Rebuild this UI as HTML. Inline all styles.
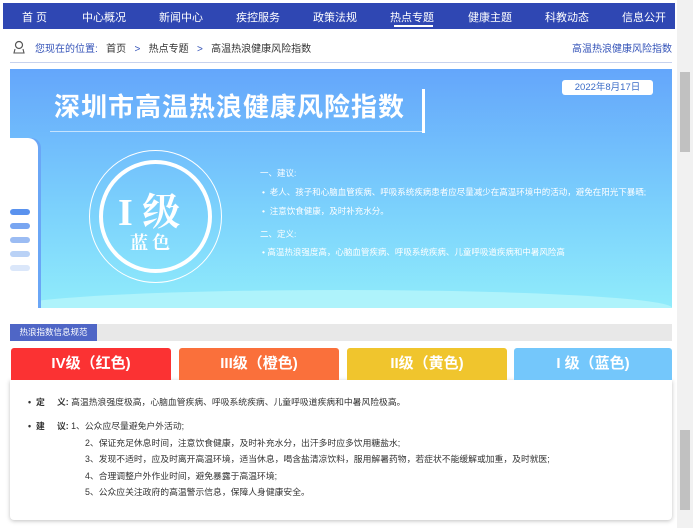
<!DOCTYPE html>
<html><head><meta charset="utf-8"><style>
*{margin:0;padding:0;box-sizing:border-box}
body{width:693px;height:528px;overflow:hidden;background:#fff;font-family:"Liberation Sans","Noto Sans CJK SC",sans-serif;position:relative}
.nav{position:absolute;left:3px;top:3px;width:672px;height:26px;background:#2f47b3;color:#fff;font-size:11px}
.nav span{position:absolute;top:6px}
.sb{position:absolute;right:0;top:0;width:16px;height:528px;background:#f1f1f1}
.a{position:absolute}
.card{position:absolute;top:348px;height:32px;border-radius:3px 3px 0 0;color:#fff;font-size:15px;font-weight:bold;text-align:center;line-height:32px}
</style></head><body>
<div class="nav">
<span style="left:19px">首 页</span><span style="left:79px">中心概况</span><span style="left:156px">新闻中心</span><span style="left:233px">疾控服务</span><span style="left:310px">政策法规</span><span style="left:387px">热点专题</span><span style="left:465px">健康主题</span><span style="left:542px">科教动态</span><span style="left:619px">信息公开</span>
<div class="a" style="left:391px;top:22px;width:39px;height:2px;background:#fff"></div>
</div>
<div class="sb"><div class="a" style="left:3px;top:72px;width:10px;height:80px;background:#c1c1c1"></div><div class="a" style="left:3px;top:430px;width:10px;height:80px;background:#c1c1c1"></div></div>
<svg class="a" style="left:13px;top:40px" width="12" height="14" viewBox="0 0 12 14"><circle cx="6" cy="5" r="3.5" fill="none" stroke="#555" stroke-width="1.2"/><path d="M2 9 L1 13 H11 L10 9" fill="none" stroke="#555" stroke-width="1.1"/></svg>
<div class="a" style="left:35px;top:40px;font-size:10px;color:#333"><span style="color:#3453b8">您现在的位置:</span>&nbsp;&nbsp;&nbsp;首页&nbsp;&nbsp;&nbsp;<span style="color:#3453b8">&gt;</span>&nbsp;&nbsp;&nbsp;热点专题&nbsp;&nbsp;&nbsp;<span style="color:#3453b8">&gt;</span>&nbsp;&nbsp;&nbsp;高温热浪健康风险指数</div>
<div class="a" style="left:572px;top:40px;font-size:10px;color:#3453b8">高温热浪健康风险指数</div>
<div class="a" style="left:10px;top:62px;width:662px;height:1px;background:#c7d2ee"></div>
<div class="a" style="left:10px;top:69px;width:662px;height:239px;background:linear-gradient(#64a6fb,#7cd2fc 60%,#90ecfb)"></div>
<div class="a" style="left:10px;top:290px;width:662px;height:18px;background:#aef3fb;border-radius:50% 50% 0 0/100% 100% 0 0"></div>
<div class="a" style="left:54px;top:87px;font-size:26px;font-weight:bold;color:#fff;letter-spacing:1px">深圳市高温热浪健康风险指数</div>
<div class="a" style="left:422px;top:89px;width:3px;height:44px;background:#fff"></div>
<div class="a" style="left:50px;top:131px;width:375px;height:1px;background:rgba(255,255,255,.6)"></div>
<div class="a" style="left:562px;top:80px;width:91px;height:15px;background:#fff;border-radius:3px;color:#3b6cc7;font-size:9.5px;text-align:center;line-height:15px">2022年8月17日</div>
<div class="a" style="left:10px;top:138px;width:28px;height:170px;background:#fff;border-radius:0 10px 0 0;box-shadow:3px 0 0 #6aa6f6"></div>
<div class="a" style="left:10px;top:209px;width:20px;height:6px;background:#5a92ee;border-radius:3px"></div>
<div class="a" style="left:10px;top:223px;width:20px;height:6px;background:#79a6f1;border-radius:3px"></div>
<div class="a" style="left:10px;top:237px;width:20px;height:6px;background:#9bbcf3;border-radius:3px"></div>
<div class="a" style="left:10px;top:251px;width:20px;height:6px;background:#bad2f6;border-radius:3px"></div>
<div class="a" style="left:10px;top:265px;width:20px;height:6px;background:#dbe7fa;border-radius:3px"></div>
<div class="a" style="left:89px;top:150px;width:133px;height:133px;border:1.5px solid #fff;border-radius:50%"></div>
<div class="a" style="left:99px;top:160px;width:113px;height:113px;border:4px solid #fff;border-radius:50%"></div>
<div class="a" style="left:118px;top:181px;font-size:38px;color:#fff;font-weight:bold;font-family:'Liberation Serif','Noto Serif CJK SC',serif">I 级</div>
<div class="a" style="left:130px;top:229px;font-size:18px;color:#fff;font-weight:bold;font-family:'Liberation Serif','Noto Serif CJK SC',serif;letter-spacing:4px">蓝色</div>
<div class="a" style="left:260px;top:167px;font-size:8.5px;color:#fff">一、建议:</div>
<div class="a" style="left:262px;top:186px;font-size:8.5px;color:#fff">•&nbsp; 老人、孩子和心脑血管疾病、呼吸系统疾病患者应尽量减少在高温环境中的活动，避免在阳光下暴晒;</div>
<div class="a" style="left:262px;top:205px;font-size:8.5px;color:#fff">•&nbsp; 注意饮食健康，及时补充水分。</div>
<div class="a" style="left:260px;top:228px;font-size:8.5px;color:#fff">二、定义:</div>
<div class="a" style="left:262px;top:246px;font-size:8.5px;color:#fff">• 高温热浪强度高，心脑血管疾病、呼吸系统疾病、儿童呼吸道疾病和中暑风险高</div>
<div class="a" style="left:10px;top:324px;width:662px;height:17px;background:#e8e8e8"></div>
<div class="a" style="left:10px;top:324px;width:87px;height:17px;background:#4f66c6;color:#fff;font-size:8.5px;line-height:17px;text-align:center">热浪指数信息规范</div>
<div class="a" style="left:10px;top:380px;width:662px;height:140px;background:#fff;box-shadow:0 1px 4px rgba(0,0,0,.25);border-radius:0 0 4px 4px"></div>
<div class="card" style="left:11px;width:160px;background:#fb3233">IV级（红色)</div>
<div class="card" style="left:179px;width:160px;background:#fa703b">III级（橙色)</div>
<div class="card" style="left:347px;width:160px;background:#f0c52d">II级（黄色)</div>
<div class="card" style="left:514px;width:158px;background:#74c7fb">I 级（蓝色)</div>
<div class="a" style="left:28px;top:394px;font-size:8.8px;color:#333;line-height:17px"><b>•&nbsp;&nbsp;定&nbsp;&nbsp;&nbsp;&nbsp;&nbsp;义:</b> 高温热浪强度极高，心脑血管疾病、呼吸系统疾病、儿童呼吸道疾病和中暑风险极高。</div>
<div class="a" style="left:28px;top:418px;font-size:8.8px;color:#333;line-height:16.5px"><b>•&nbsp;&nbsp;建&nbsp;&nbsp;&nbsp;&nbsp;&nbsp;议:</b> 1、公众应尽量避免户外活动;</div>
<div class="a" style="left:85px;top:434.5px;font-size:8.8px;color:#333;line-height:16.5px">2、保证充足休息时间，注意饮食健康，及时补充水分，出汗多时应多饮用糖盐水;<br>3、发现不适时，应及时离开高温环境，适当休息，喝含盐清凉饮料，服用解暑药物，若症状不能缓解或加重，及时就医;<br>4、合理调整户外作业时间，避免暴露于高温环境;<br>5、公众应关注政府的高温警示信息，保障人身健康安全。</div>
</body></html>
